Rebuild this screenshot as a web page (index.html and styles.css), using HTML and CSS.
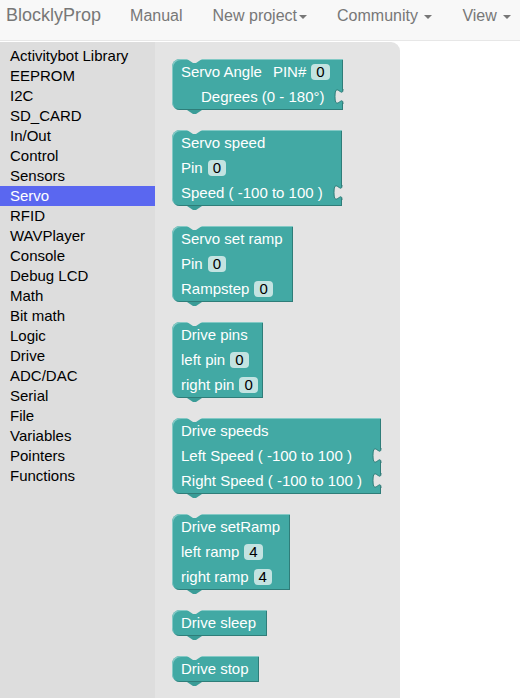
FILE: index.html
```html
<!DOCTYPE html>
<html>
<head>
<meta charset="utf-8">
<link rel="stylesheet" href="styles.css">
</head>
<body>
<header class="navbar">
  <span class="brand">BlocklyProp</span>
  <span class="nav-link">Manual</span>
  <span class="nav-link">New project<span class="caret"></span></span>
  <span class="nav-link">Community <span class="caret"></span></span>
  <span class="nav-link">View <span class="caret"></span></span>
</header>
<main class="workspace">
  <nav class="toolbox">
    <div class="cat">Activitybot Library</div>
    <div class="cat">EEPROM</div>
    <div class="cat">I2C</div>
    <div class="cat">SD_CARD</div>
    <div class="cat">In/Out</div>
    <div class="cat">Control</div>
    <div class="cat">Sensors</div>
    <div class="cat selected">Servo</div>
    <div class="cat">RFID</div>
    <div class="cat">WAVPlayer</div>
    <div class="cat">Console</div>
    <div class="cat">Debug LCD</div>
    <div class="cat">Math</div>
    <div class="cat">Bit math</div>
    <div class="cat">Logic</div>
    <div class="cat">Drive</div>
    <div class="cat">ADC/DAC</div>
    <div class="cat">Serial</div>
    <div class="cat">File</div>
    <div class="cat">Variables</div>
    <div class="cat">Pointers</div>
    <div class="cat">Functions</div>
  </nav>
  <section class="flyout">
    <div class="block w-servo-angle">
      <div class="row"><span>Servo Angle</span><span class="label-gap">PIN#</span><span class="field">0</span></div>
      <div class="row indent">Degrees (0 - 180°)<svg class="notch" viewBox="0 0 8 15"><path class="notch-fill" d="M8,0 C8,10 0,-8 0,7.5 S8,5 8,15 Z"/><path class="notch-edge" d="M8,0 C8,10 0,-8 0,7.5 S8,5 8,15"/></svg></div>
    </div>
    <div class="block w-servo-speed">
      <div class="row">Servo speed</div>
      <div class="row">Pin<span class="field">0</span></div>
      <div class="row">Speed ( -100 to 100 )<svg class="notch" viewBox="0 0 8 15"><path class="notch-fill" d="M8,0 C8,10 0,-8 0,7.5 S8,5 8,15 Z"/><path class="notch-edge" d="M8,0 C8,10 0,-8 0,7.5 S8,5 8,15"/></svg></div>
    </div>
    <div class="block w-servo-ramp">
      <div class="row">Servo set ramp</div>
      <div class="row">Pin<span class="field">0</span></div>
      <div class="row">Rampstep<span class="field">0</span></div>
    </div>
    <div class="block w-drive-pins">
      <div class="row">Drive pins</div>
      <div class="row">left pin<span class="field">0</span></div>
      <div class="row">right pin<span class="field">0</span></div>
    </div>
    <div class="block w-drive-speeds">
      <div class="row">Drive speeds</div>
      <div class="row">Left Speed ( -100 to 100 )<svg class="notch" viewBox="0 0 8 15"><path class="notch-fill" d="M8,0 C8,10 0,-8 0,7.5 S8,5 8,15 Z"/><path class="notch-edge" d="M8,0 C8,10 0,-8 0,7.5 S8,5 8,15"/></svg></div>
      <div class="row">Right Speed ( -100 to 100 )<svg class="notch" viewBox="0 0 8 15"><path class="notch-fill" d="M8,0 C8,10 0,-8 0,7.5 S8,5 8,15 Z"/><path class="notch-edge" d="M8,0 C8,10 0,-8 0,7.5 S8,5 8,15"/></svg></div>
    </div>
    <div class="block w-drive-ramp">
      <div class="row">Drive setRamp</div>
      <div class="row">left ramp<span class="field">4</span></div>
      <div class="row">right ramp<span class="field">4</span></div>
    </div>
    <div class="block w-drive-sleep">
      <div class="row">Drive sleep</div>
    </div>
    <div class="block w-drive-stop">
      <div class="row">Drive stop</div>
    </div>
  </section>
  <div class="canvas"></div>
</main>
</body>
</html>
```

FILE: styles.css
```css
html, body {
  margin: 0;
  padding: 0;
  height: 100%;
  overflow: hidden;
  background: #ffffff;
  font-family: "Liberation Sans", Arial, sans-serif;
}

.navbar {
  height: 41px;
  box-sizing: border-box;
  background: #f8f8f8;
  border-bottom: 1px solid #e7e7e7;
  display: flex;
  align-items: baseline;
  padding: 5px 0 0 6px;
  color: #777777;
  white-space: nowrap;
}

.brand {
  font-size: 18px;
  line-height: 20px;
  margin-right: 14px;
}

.nav-link {
  font-size: 16px;
  line-height: 20px;
  padding: 0 15px;
}

.caret {
  display: inline-block;
  width: 0;
  height: 0;
  margin-left: 2px;
  vertical-align: middle;
  border-top: 4px solid #777777;
  border-left: 4px solid transparent;
  border-right: 4px solid transparent;
}

.workspace {
  display: flex;
  height: calc(100% - 41px);
  padding-top: 1px;
  box-sizing: border-box;
}

.toolbox {
  width: 155px;
  flex: none;
  background: #dddddd;
  padding-top: 4px;
  box-sizing: border-box;
}

.cat {
  font-size: 15px;
  line-height: 20px;
  height: 20px;
  padding-left: 10px;
  color: #000000;
  white-space: nowrap;
}

.cat.selected {
  background: #5a67f0;
  color: #ffffff;
}

.flyout {
  width: 245px;
  flex: none;
  background: #e4e4e4;
  border-top-right-radius: 9px;
  padding: 17px 0 0 17px;
  box-sizing: border-box;
  display: flex;
  flex-direction: column;
  align-items: flex-start;
  gap: 20px;
}

.canvas {
  flex: 1;
  background: #ffffff;
}

.block {
  position: relative;
  box-sizing: border-box;
  background: #42a9a4;
  color: #ffffff;
  font-size: 15px;
  border-radius: 8px 0 0 8px;
  padding: 0 0 1px 9px;
  box-shadow: inset 1px 1px 0 #83c9c5, inset -1px -1px 0 #2f7d79;
}

.block::before {
  content: "";
  position: absolute;
  top: 0;
  left: 15px;
  width: 15px;
  height: 4px;
  background: #e4e4e4;
  clip-path: polygon(0 0, 15px 0, 9px 4px, 6px 4px);
}

.block::after {
  content: "";
  position: absolute;
  top: 100%;
  left: 15px;
  width: 15px;
  height: 4px;
  background: #3a9c97;
  clip-path: polygon(0 0, 15px 0, 9px 4px, 6px 4px);
}

.row {
  position: relative;
  height: 25px;
  display: flex;
  align-items: center;
  white-space: nowrap;
}

.row.indent {
  padding-left: 20px;
}

.label-gap {
  margin-left: 11px;
}

.field {
  display: inline-block;
  margin-left: 5px;
  padding: 0 5px;
  height: 16px;
  line-height: 16px;
  border-radius: 4px;
  background: #c3e3e1;
  color: #000000;
}

.notch {
  position: absolute;
  right: 0;
  top: 5px;
  width: 8px;
  height: 15px;
  overflow: visible;
}

.notch-fill {
  fill: #e4e4e4;
}

.notch-edge {
  fill: none;
  stroke: #2f7d79;
  stroke-width: 1;
}

.w-servo-angle { width: 171px; }
.w-servo-speed { width: 170px; }
.w-servo-ramp { width: 121px; }
.w-drive-pins { width: 91px; }
.w-drive-speeds { width: 209px; }
.w-drive-ramp { width: 118px; }
.w-drive-sleep { width: 95px; }
.w-drive-stop { width: 87px; }
```
